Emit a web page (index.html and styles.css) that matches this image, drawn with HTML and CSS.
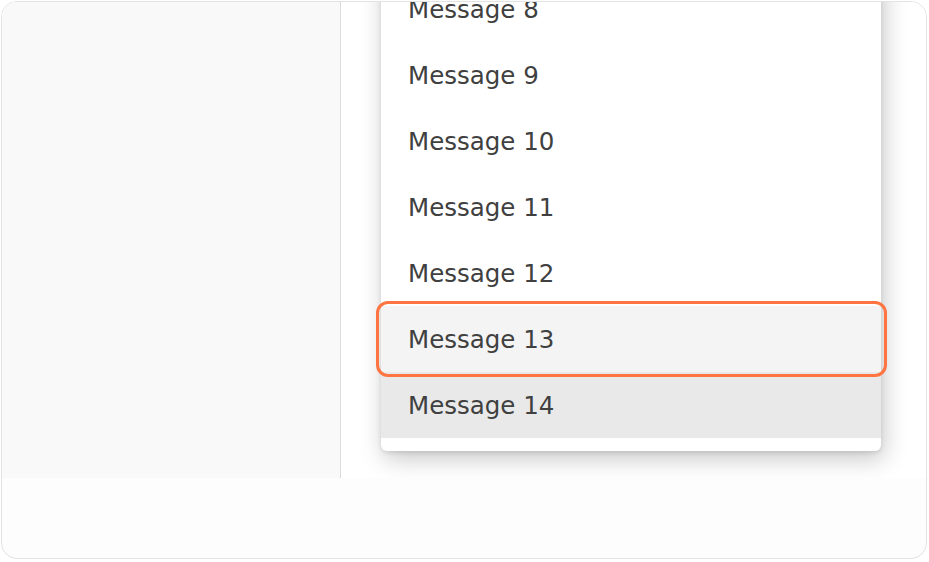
FILE: index.html
```html
<!doctype html>
<html lang="en">
<head>
<meta charset="UTF-8">
<title>Messages</title>
<link rel="stylesheet" href="styles.css">
</head>
<body>
	<div class="frame">
		<div class="app">
			<aside class="sidebar"></aside>
			<main class="main">
				<ul class="menu">
					<li class="item">Message 1</li>
					<li class="item">Message 2</li>
					<li class="item">Message 3</li>
					<li class="item">Message 4</li>
					<li class="item">Message 5</li>
					<li class="item">Message 6</li>
					<li class="item">Message 7</li>
					<li class="item">Message 8</li>
					<li class="item">Message 9</li>
					<li class="item">Message 10</li>
					<li class="item">Message 11</li>
					<li class="item">Message 12</li>
					<li class="item item-focus">Message 13</li>
					<li class="item item-hover">Message 14</li>
				</ul>
			</main>
		</div>
		<div class="footer"></div>
	</div>
</body>
</html>
```

FILE: styles.css
```css
*{
	box-sizing: border-box;
}
body{
	margin: 0;
	background-color: white;
	font-family: "DejaVu Sans", "Open Sans", sans-serif;
}

.frame{
	margin: 1px;
	width: 926px;
	height: 558px;
	border: 1px solid #e3e3e3;
	border-radius: 16px;
	overflow: hidden;
	background-color: #fdfdfd;
}

.app{
	display: flex;
	height: 476px;
	background-color: white;
}
.sidebar{
	width: 339px;
	background-color: #f9f9f9;
	border-right: 1px solid #dcdcdc;
}
.main{
	flex: 1;
	position: relative;
	overflow: hidden;
}

/* dropdown list, scrolled to the bottom */
.menu{
	position: absolute;
	left: 40px;
	bottom: 27px;
	width: 500px;
	margin: 0;
	padding: 0 0 13px;
	list-style: none;
	background-color: white;
	border-radius: 6px;
	box-shadow: 3px 8px 24px rgba(0,0,0,0.22), 0 2px 4px rgba(0,0,0,0.1);
}
.item{
	height: 66px;
	padding-left: 27px;
	display: flex;
	align-items: center;
	font-size: 24.5px;
	color: #404040;
	position: relative;
}
.item-focus{
	background-color: #f4f4f4;
	z-index: 1;
}
.item-focus::after{
	content: "";
	position: absolute;
	left: -5px;
	right: -6px;
	top: -5px;
	bottom: -5px;
	border: 3px solid #ff7441;
	border-radius: 12px;
}
.item-hover{
	background-color: #e9e9e9;
}

.footer{
	height: 80px;
}
```
